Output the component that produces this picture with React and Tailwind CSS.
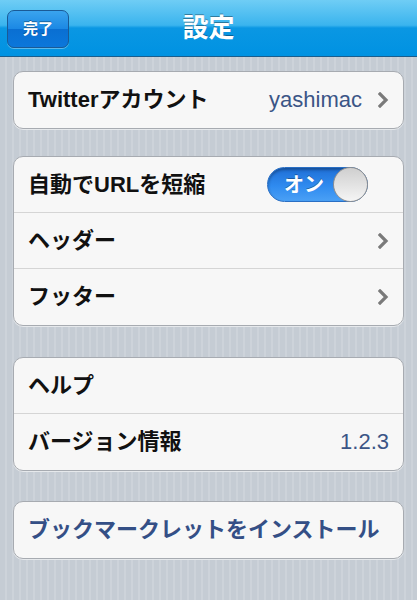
import React from 'react';

const font = { fontFamily: '"Liberation Sans", "Noto Sans CJK JP", sans-serif' };

const Chevron = () => (
  <svg width="11" height="16" viewBox="0 0 11 16" className="ml-[16px] shrink-0">
    <path d="M2 2 L8 8 L2 14" fill="none" stroke="#7a7a7a" strokeWidth="3.2" strokeLinecap="square" />
  </svg>
);

const Row = ({ label, value, chevron, last, blue }) => (
  <div
    className={`flex h-[56px] items-center pl-[14px] pr-[14px] ${last ? '' : 'border-b border-[#d5d5d5]'}`}
  >
    <span className={`flex-1 whitespace-nowrap text-[22px] font-bold leading-none ${blue ? 'text-[#344f86]' : 'text-[#111]'}`}>
      {label}
    </span>
    {value && <span className="text-[22px] leading-none text-[#3b5586]">{value}</span>}
    {chevron && <Chevron />}
  </div>
);

const Group = ({ children, className = '' }) => (
  <div className={`mx-[13px] overflow-hidden rounded-[10px] border border-[#a7abb1] bg-[#f7f7f7] shadow-[0_1px_0_#e6e9ec] ${className}`}>
    {children}
  </div>
);

const Toggle = () => (
  <div className="relative mr-[35px] flex h-[35px] w-[101px] items-center rounded-full border border-[#2a6fc4] bg-[linear-gradient(#1f6fd6,#2f8bf0_55%,#4aa0f5)] shadow-[inset_0_2px_3px_rgba(0,0,0,0.3)]">
    <span className="pl-[16px] text-[20px] font-bold text-white [text-shadow:0_-1px_0_rgba(0,0,0,0.3)]">オン</span>
    <div className="absolute right-[-1px] top-[-1px] h-[35px] w-[35px] rounded-full border border-[#8f8f8f] bg-[linear-gradient(#cfcfcf,#f5f5f5)]" />
  </div>
);

export default function App() {
  return (
    <div
      style={font}
      className="h-[600px] w-[417px] overflow-hidden bg-[repeating-linear-gradient(90deg,#c5ccd4_0px,#c5ccd4_5px,#cdd3da_5px,#cdd3da_7px)]"
    >
      <div className="relative flex h-[57px] items-center justify-center border-b border-[#1b5d8c] bg-[linear-gradient(#6fcdf5,#3ab4ee_45%,#0a97e3_50%,#0092e2)]">
        <button className="absolute left-[7px] top-[10px] flex h-[38px] w-[62px] items-center justify-center rounded-[7px] border border-[#1a5a96] bg-[linear-gradient(#3aa4ee,#1b88e4_50%,#0a6fd2_51%,#0b77db)] text-[15px] font-bold text-white [text-shadow:0_-1px_0_rgba(0,0,0,0.35)] shadow-[0_1px_0_rgba(255,255,255,0.35)]">
          完了
        </button>
        <h1 className="text-[26px] font-bold text-white [text-shadow:0_-1px_0_rgba(0,0,0,0.35)]">設定</h1>
      </div>

      <div className="pt-[14px]">
        <Group>
          <Row label="Twitterアカウント" value="yashimac" chevron last />
        </Group>

        <Group className="mt-[27px]">
          <div className="flex h-[56px] items-center justify-between border-b border-[#d5d5d5] pl-[14px]">
            <span className="text-[22px] font-bold leading-none text-[#111]">自動でURLを短縮</span>
            <Toggle />
          </div>
          <Row label="ヘッダー" chevron />
          <Row label="フッター" chevron last />
        </Group>

        <Group className="mt-[31px]">
          <Row label="ヘルプ" />
          <Row label="バージョン情報" value="1.2.3" last />
        </Group>

        <Group className="mt-[30px]">
          <Row label="ブックマークレットをインストール" blue last />
        </Group>
      </div>
    </div>
  );
}
